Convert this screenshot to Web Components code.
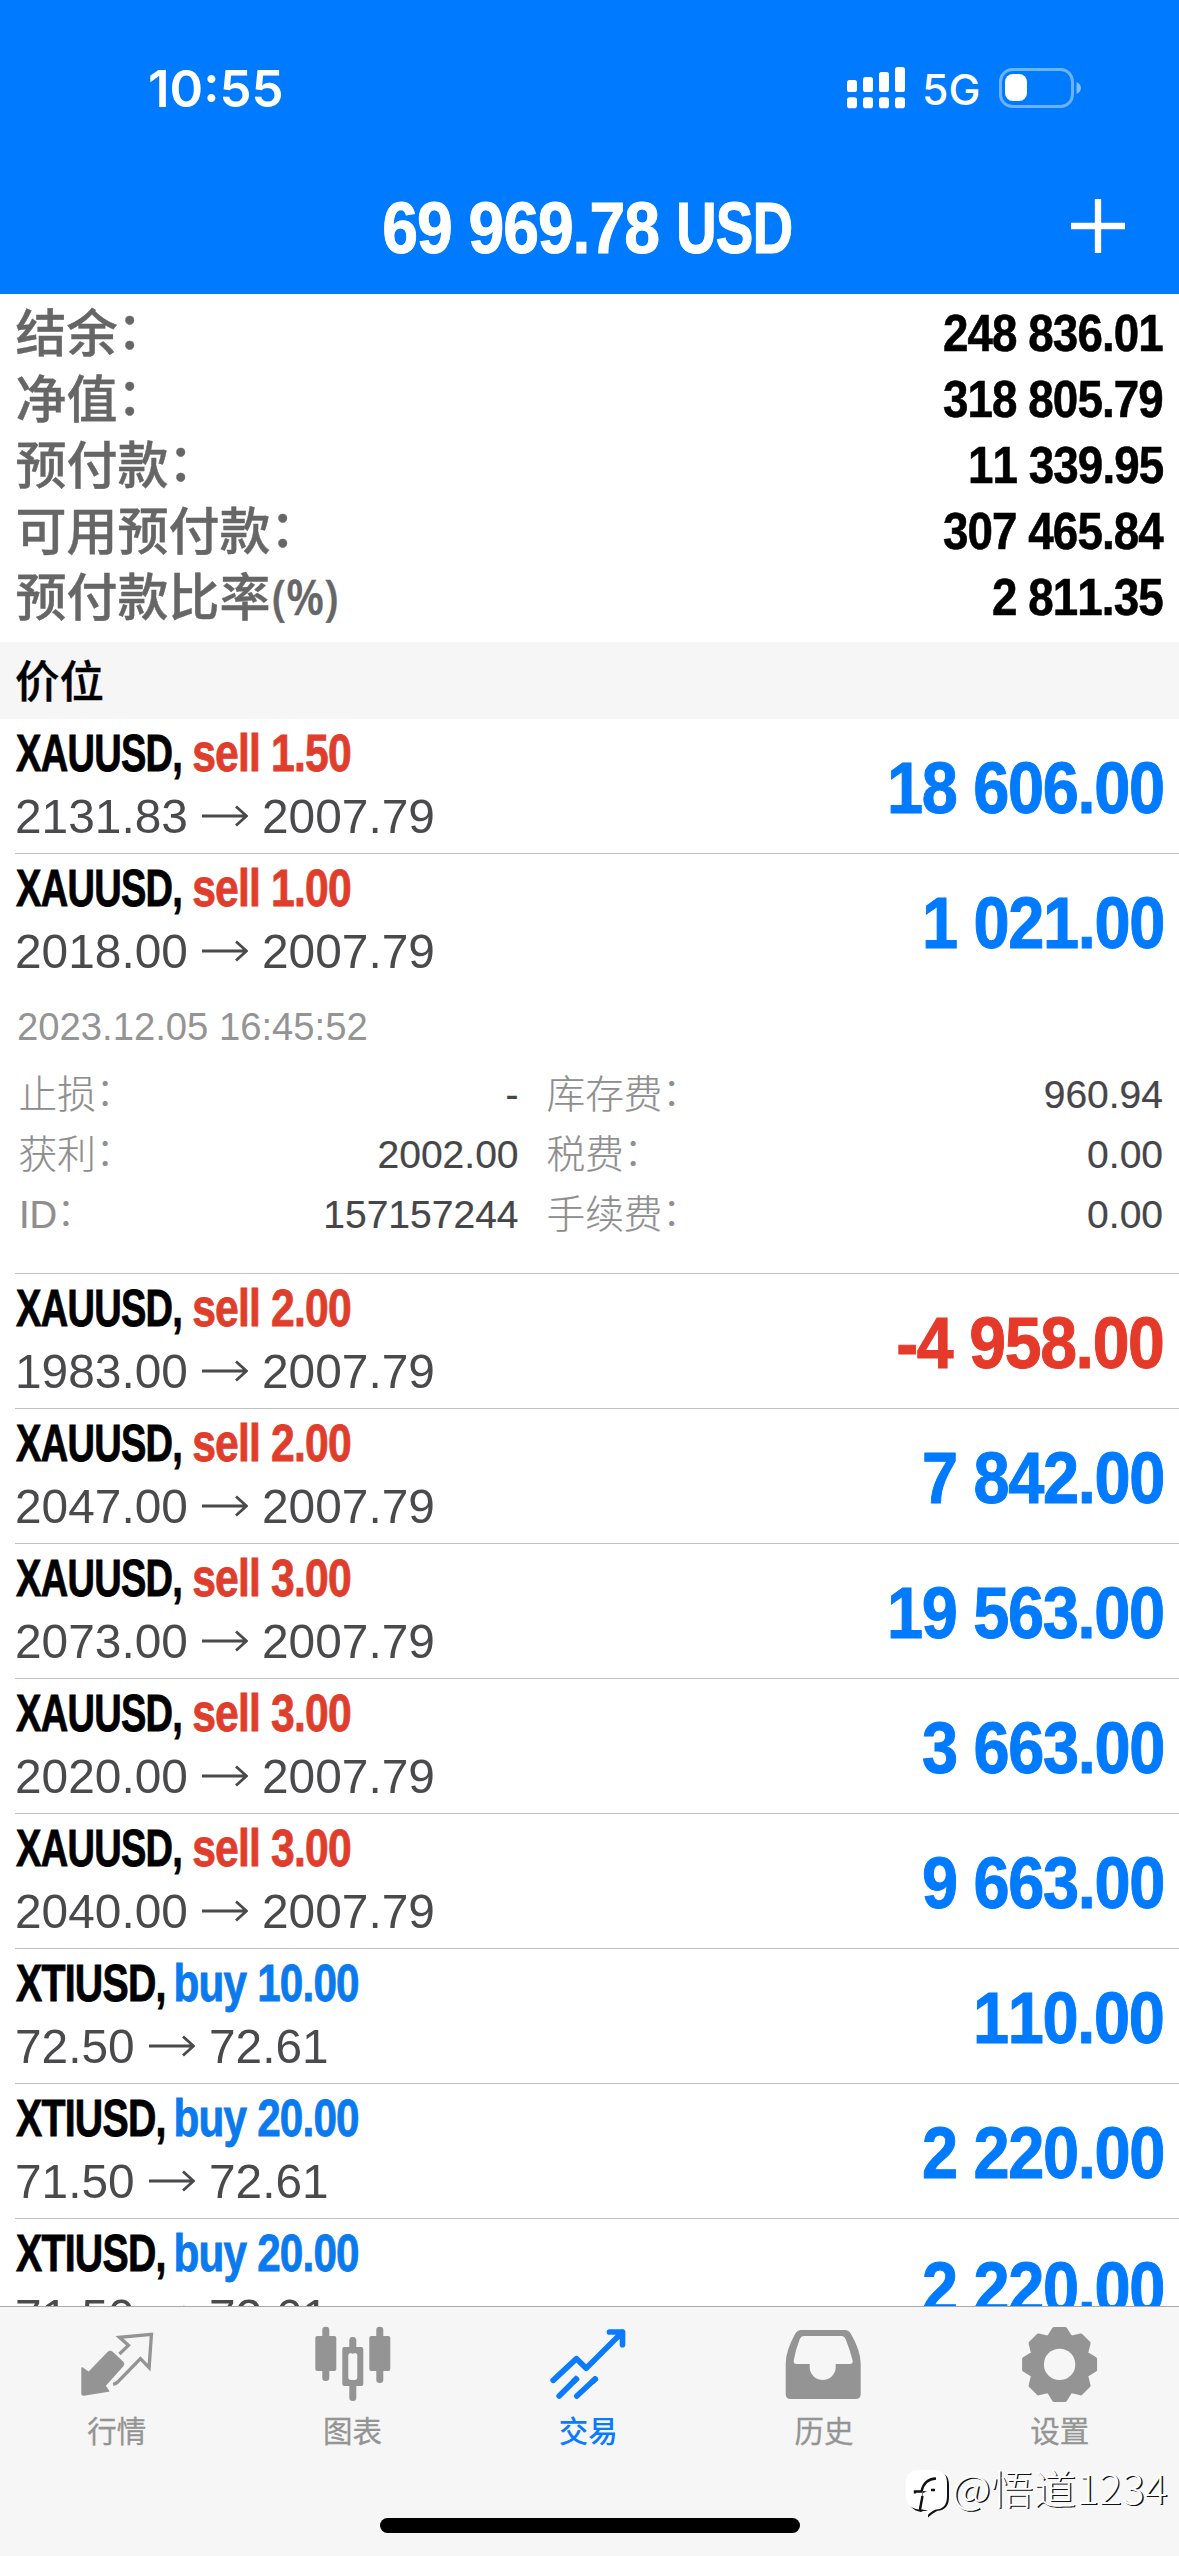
<!DOCTYPE html>
<html lang="zh-CN">
<head>
<meta charset="utf-8">
<title>交易</title>
<style>
html,body{margin:0;padding:0;background:#fff}
body{width:1179px;height:2556px;overflow:hidden;font-family:"Liberation Sans","Noto Sans CJK SC",sans-serif;font-kerning:none}
</style>
</head>
<body>
<trade-app></trade-app>
<script>
const css = s => `<style>*{box-sizing:border-box}${s}</style>`;
const pen = document.createElement('canvas').getContext('2d');

/* A single line of text squeezed horizontally. Its box is as tall as h, with the baseline on the lower edge.
   fit = exact width of the drawn glyphs; scale = horizontal factor on the advance width. */
class FitText extends HTMLElement {
  connectedCallback() {
    const root = this.shadowRoot || this.attachShadow({mode: 'open'});
    const h = parseFloat(this.getAttribute('h') || '35');
    root.innerHTML = css(`:host{display:block;flex:none;height:${h}px;white-space:pre}
      span{display:inline-block;line-height:${h}px;height:${h}px;transform-origin:0 0;vertical-align:top}`) + '<span><slot></slot></span>';
    const cs = getComputedStyle(this);
    pen.font = `${cs.fontWeight} ${cs.fontSize} ${cs.fontFamily}`;
    pen.fontKerning = 'none';
    pen.letterSpacing = cs.letterSpacing === 'normal' ? '0px' : cs.letterSpacing;
    const m = pen.measureText(this.textContent);
    const fit = this.getAttribute('fit');
    let s, dx = 0, w;
    if (fit) {
      w = parseFloat(fit);
      s = w / (m.actualBoundingBoxLeft + m.actualBoundingBoxRight);
      dx = m.actualBoundingBoxLeft;
    } else {
      s = parseFloat(this.getAttribute('scale') || '1');
      w = m.width * s;
    }
    const dy = h / 2 - (m.fontBoundingBoxAscent - m.fontBoundingBoxDescent) / 2;
    this.style.width = w + 'px';
    root.querySelector('span').style.transform = `scaleX(${s}) translate(${dx}px,${dy}px)`;
  }
}
customElements.define('fit-text', FitText);

class Base extends HTMLElement {
  connectedCallback() {
    if (this.shadowRoot) return;
    this.attachShadow({mode: 'open'}).innerHTML = this.render();
  }
  a(n) { return this.getAttribute(n) || ''; }
  /* label whose full-width colon sits tight and centred */
  label() { return this.a('label').replace('：', '<i>：</i>'); }
}

customElements.define('status-bar', class extends Base {
  render() {
    const bars = [[0,80],[16,77],[32,72],[48,67]].map(([x,y]) =>
      `<rect x="${x}" y="${y-67}" width="10" height="${92-y}" rx="2.6"/><rect x="${x}" y="30.2" width="10" height="11" rx="2.8"/>`).join('');
    return css(`:host{display:flex;align-items:flex-start;height:160px;padding:67px 96px 0 150px;color:#fff;font-family:Inter,sans-serif}
      .time{margin-top:2.8px;font-size:51px;font-weight:600}
      .net{margin:7px 0 0 20.5px;font-size:42px;font-weight:500}
      .sig{margin-left:auto} svg{display:block;flex:none} .bat{margin-left:21px}`) + `
      <fit-text class="time" h="37" fit="131.5">10:55</fit-text>
      <svg class="sig" width="58" height="42" fill="#fff">${bars}</svg>
      <fit-text class="net" h="31" fit="53">5G</fit-text>
      <svg class="bat" width="84" height="42"><rect x="1.5" y="2.5" width="72" height="37" rx="12" fill="none" stroke="#fff" stroke-opacity=".42" stroke-width="3"/>
        <rect x="6" y="7" width="22" height="27" rx="8" fill="#fff"/><path d="M77.5 15v12c6-2.500 6-9.500 0-12z" fill="#fff" fill-opacity=".5"/></svg>`;
  }
});

customElements.define('account-header', class extends Base {
  render() {
    return css(`:host{display:block;flex:none;height:293.5px;background:#007aff;color:#fff}
      .bar{display:grid;grid-template-columns:384px 1fr 108px;align-items:start;padding-top:39px}
      .sum{grid-column:2;display:flex;gap:20.500px;margin-top:3px;font-size:73px;font-weight:700;letter-spacing:-1.200px;-webkit-text-stroke:1px #fff}
      svg{grid-column:3;display:block}`) + `
      <status-bar></status-bar>
      <div class="bar"><div class="sum"><fit-text h="51" fit="274.5">69 969.78</fit-text><fit-text h="51" fit="112">USD</fit-text></div>
      <svg width="54" height="54"><path d="M27 0v54M0 27h54" stroke="#fff" stroke-width="6.300"/></svg></div>`;
  }
});

customElements.define('summary-line', class extends Base {
  render() {
    return css(`:host{display:flex;height:66px;justify-content:space-between;align-items:flex-start;padding:0 16px 0 15.5px}
      .k{display:flex;margin-top:4.500px;font:500 51px/66px "Liberation Sans","Noto Sans CJK SC",sans-serif;color:#666;-webkit-text-stroke:.4px #666}
      i{display:inline-block;font-style:normal;transform:translate(-.5px,-3.500px)}
      .k fit-text{margin:13.500px 0 0 2.500px;font:600 49px "Open Sans",sans-serif}
      .v{margin-top:18px;font-size:51px;font-weight:700;letter-spacing:-1px;color:#000;-webkit-text-stroke:.6px #000}`) + `
      <div class="k"><div>${this.label()}</div>${this.a('unit') ? `<fit-text h="36" fit="64">${this.a('unit')}</fit-text>` : ''}</div>
      <fit-text class="v" h="36" scale=".896">${this.a('value')}</fit-text>`;
  }
});

customElements.define('account-summary', class extends Base {
  render() {
    return css(`:host{display:block;flex:none;padding:3.500px 0 14.500px;background:#fff}`) + '<slot></slot>';
  }
});

customElements.define('section-title', class extends Base {
  render() {
    return css(`:host{display:block;flex:none;height:77px;padding-left:15px;background:#f6f6f6;color:#000;font:500 44.500px/73px "Noto Sans CJK SC",sans-serif;-webkit-text-stroke:.4px #000}`) + '<slot></slot>';
  }
});

customElements.define('position-row', class extends Base {
  render() {
    const buy = this.a('side') === 'buy', sym = this.a('symbol');
    const col = buy ? '#0a7aee' : '#e03e2d';
    const neg = this.a('profit')[0] === '-';
    return css(`:host{display:block;flex:none}
      .box{margin-left:15px;border-bottom:1px solid #c0c0c0}
      .main{display:flex;justify-content:space-between;height:134px;padding-right:${neg ? 16.5 : 15.5}px}
      .l{padding-top:17px}
      .t{display:flex;gap:12.500px;padding-left:.5px;font-size:51px;font-weight:700;letter-spacing:-1px;color:#000;-webkit-text-stroke:.8px}
      .s{color:${col}}
      .p{display:flex;align-items:flex-start;margin-top:27.500px;font-size:49px;color:#4a4a4d}
      .p svg{margin:7px 14px 0;flex:none}
      .r{margin-top:43.500px;font-size:73px;font-weight:700;letter-spacing:-1.500px;color:${neg ? '#e5392a' : '#007aff'};-webkit-text-stroke:1px}`) + `
      <div class="box"><div class="main"><div class="l">
        <div class="t"><fit-text h="35" fit="${buy ? 148 : 164.5}">${sym},</fit-text><fit-text class="s" h="35" fit="${buy ? 182.5 : 157.5}">${this.a('side')} ${this.a('lots')}</fit-text></div>
        <div class="p"><fit-text h="35" scale=".976">${this.a('open')}</fit-text>
          <svg width="46" height="22" fill="none" stroke="#4a4a4d" stroke-width="2.800"><path d="M0 11h44M34 1.500l10.500 9.500-10.500 9.500"/></svg>
          <fit-text h="35" scale=".976">${this.a('now')}</fit-text></div>
      </div><fit-text class="r" h="51" ${neg ? 'fit="264.5"' : 'scale=".889"'}>${this.a('profit')}</fit-text></div><slot></slot></div>`;
  }
});

customElements.define('detail-pair', class extends Base {
  render() {
    return css(`:host{display:flex;justify-content:space-between;height:60px;color:#8e8e8e;font:300 38.700px/60px "Noto Sans CJK SC",sans-serif;-webkit-text-stroke:.2px}
      i{display:inline-block;font-style:normal;transform:translate(-.5px,-3px)}
      .k{display:flex} .k fit-text{margin-top:19px;font:39px "Liberation Sans"}
      .v{margin-top:19px;font:39px "Liberation Sans";color:#464649}`) + `
      <div class="k">${this.a('latin') ? `<fit-text h="28.500" scale=".98">${this.a('latin')}</fit-text>` : ''}<div>${this.label()}</div></div>
      <fit-text class="v" h="28.500">${this.a('value')}</fit-text>`;
  }
});

customElements.define('position-detail', class extends Base {
  render() {
    return css(`:host{display:block;height:285px}
      .d{padding:24px 0 0 2px} .d fit-text{font-size:39px;color:#949494}
      .g{display:grid;grid-template-columns:500px 616.500px;column-gap:28px;margin-top:20.500px;padding-left:3.500px}`) + `
      <div class="d"><fit-text h="28.500" scale=".98">${this.a('time')}</fit-text></div><div class="g"><slot></slot></div>`;
  }
});

customElements.define('tab-item', class extends Base {
  render() {
    return css(`:host{flex:1;display:flex;flex-direction:column;align-items:center;padding-top:12px;color:#949494;font:400 29.500px/44px "Noto Sans CJK SC",sans-serif;-webkit-text-stroke:.3px}
      :host([active]){color:#0a7aff;font-weight:500;-webkit-text-stroke:0}
      ::slotted(svg){display:block;flex:none}
      span{margin:1.500px 2.500px 0 0}`) + `<slot name="icon"></slot><span><slot></slot></span>`;
  }
});

const gear = (() => {
  const pts = [];
  for (let i = 0; i < 8; i++) {
    const t = i * Math.PI / 4;
    for (const [r, w] of [[26.5,-11],[29,-9.5],[35.5,-5.5],[35.5,5.5],[29,9.5],[26.5,11]])
      pts.push((r * Math.cos(t) - w * Math.sin(t)).toFixed(2) + ' ' + (r * Math.sin(t) + w * Math.cos(t)).toFixed(2));
  }
  return 'M' + pts.join('L') + 'Z';
})();

const icon = (x, body) => `<svg slot="icon" width="80" height="86" viewBox="${x} 2318 80 86">${body}</svg>`;

customElements.define('tab-bar', class extends Base {
  render() {
    return css(`:host{display:block;flex:none;height:250px;background:#f6f6f6;border-top:1px solid #a8a8a8}
      .tabs{display:flex;height:210.500px}
      .home{width:420px;height:15px;border-radius:8px;background:#000;margin:0 auto}`) + `
    <div class="tabs">
      <tab-item>${icon(77.9, `<g transform="translate(40 2310) scale(.33333)"><path d="M126 171L146 185L204 125Q210 119 217 125L248 154Q252 159 248 164L194 224L205 240L131 252Q126 252 126 247Z" fill="#949494" stroke="#949494" stroke-width="5" stroke-linejoin="round"/><path d="M238 129L265 103L238 79L334 70L327 170L301 143L234 212Q229 218 219 220" fill="none" stroke="#949494" stroke-width="10"/></g>`)}行情</tab-item>
      <tab-item>${icon(313.7, `<g transform="translate(40 2310) scale(.33333)" fill="#949494"><rect x="825" y="75" width="63" height="105" rx="6"/><rect x="846" y="47" width="21" height="163" rx="10"/><rect x="987" y="75" width="63" height="105" rx="6"/><rect x="1008" y="47" width="21" height="169" rx="10"/><rect x="927" y="78" width="21" height="50" rx="10"/><rect x="927" y="208" width="21" height="62" rx="10"/><path fill-rule="evenodd" d="M912 108h51q6 0 6 6v105q0 6-6 6h-51q-6 0-6-6v-105q0-6 6-6zM932 126q-8 0-8 8v65q0 8 8 8h11q8 0 8-8v-65q0-8-8-8z"/></g>`)}图表</tab-item>
      <tab-item active>${icon(549.5, `<g transform="translate(540 2310) scale(.33333)" fill="none" stroke="#0a7aff" stroke-width="17" stroke-linecap="round" stroke-linejoin="round"><path d="M41 208L111 143L140 172L249 63M210 63H249V101"/><path d="M59 255L110 204M112 255L167 204"/><path stroke-linecap="butt" d="M100 214L115 199M157 214L171 200"/></g>`)}交易</tab-item>
      <tab-item>${icon(785.3, `<path transform="translate(540 2310) scale(.33333)" fill="#949494" fill-rule="evenodd" d="M785 57H915Q927 57 934 69Q963 120 963 158V249Q963 264 948 264H753Q738 264 738 249V158Q738 120 766 69Q773 57 785 57ZM793 75Q784 75 780 85Q768 115 762 149Q761 159 771 159H810V168A39 39 0 0 0 888 168V159H930Q940 159 939 149Q930 115 918 85Q914 75 905 75Z"/>`)}历史</tab-item>
      <tab-item>${icon(1021.1, `<g transform="translate(1059.700 2363.400)"><path d="${gear}" fill="#949494" stroke="#949494" stroke-width="4" stroke-linejoin="round"/><circle r="15.700" fill="#f6f6f6"/></g>`)}设置</tab-item>
    </div><div class="home"></div>`;
  }
});

customElements.define('author-mark', class extends Base {
  render() {
    return css(`:host{display:flex;align-items:flex-start;height:48px;color:#fff;font:300 40px "Noto Sans CJK SC",sans-serif}
      svg{display:block;flex:none;margin-right:5px;overflow:visible}
      fit-text{margin-top:3px;text-shadow:1.300px 1.300px .3px #111}`) + `
      <svg width="43" height="48" viewBox="0 0 43 48"><path d="M14 2H30Q43 2 43 15V27Q43 40 31 41Q27 43 22 47.500V41H17L15 42Q3 40 2 28V15Q2 2 14 2Z" fill="#111"/>
      <path d="M13 0H28Q41 0 41 13V26Q41 39 30 39.500Q25 41 21 46L23 22L17 21L13 39.500Q0 38 0 26V13Q0 0 13 0Z" fill="#fff"/>
      <path d="M17 23L14 39L23 41L25 20Z" fill="#fff"/>
      <path d="M14 39.500L16.500 26M9 23.500V21.500H15.500Q18 9 30 8.500M25 20H29" fill="none" stroke="#111" stroke-width="2.400"/></svg>
      <fit-text h="31" fit="213">@悟道1234</fit-text>`;
  }
});

const rows = [
  ['XAUUSD','sell','1.50','2131.83','2007.79','18 606.00'],
  ['XAUUSD','sell','1.00','2018.00','2007.79','1 021.00', `<position-detail time="2023.12.05 16:45:52">
    <detail-pair label="止损：" value="-"></detail-pair><detail-pair label="库存费：" value="960.94"></detail-pair>
    <detail-pair label="获利：" value="2002.00"></detail-pair><detail-pair label="税费：" value="0.00"></detail-pair>
    <detail-pair latin="ID" label="：" value="157157244"></detail-pair><detail-pair label="手续费：" value="0.00"></detail-pair></position-detail>`],
  ['XAUUSD','sell','2.00','1983.00','2007.79','-4 958.00'],
  ['XAUUSD','sell','2.00','2047.00','2007.79','7 842.00'],
  ['XAUUSD','sell','3.00','2073.00','2007.79','19 563.00'],
  ['XAUUSD','sell','3.00','2020.00','2007.79','3 663.00'],
  ['XAUUSD','sell','3.00','2040.00','2007.79','9 663.00'],
  ['XTIUSD','buy','10.00','72.50','72.61','110.00'],
  ['XTIUSD','buy','20.00','71.50','72.61','2 220.00'],
  ['XTIUSD','buy','20.00','71.50','72.61','2 220.00']
];

customElements.define('trade-app', class extends Base {
  render() {
    return css(`:host{position:relative;display:flex;flex-direction:column;width:1179px;height:2556px;overflow:hidden;background:#fff}
      .list{flex:1;min-height:0;overflow:hidden;display:flex;flex-direction:column}
      author-mark{position:absolute;right:12px;bottom:38px}`) + `
      <account-header></account-header>
      <account-summary>
        <summary-line label="结余：" value="248 836.01"></summary-line>
        <summary-line label="净值：" value="318 805.79"></summary-line>
        <summary-line label="预付款：" value="11 339.95"></summary-line>
        <summary-line label="可用预付款：" value="307 465.84"></summary-line>
        <summary-line label="预付款比率" unit="(%)" value="2 811.35"></summary-line>
      </account-summary>
      <section-title>价位</section-title>
      <div class="list">${rows.map(r => `<position-row symbol="${r[0]}" side="${r[1]}" lots="${r[2]}" open="${r[3]}" now="${r[4]}" profit="${r[5]}">${r[6] || ''}</position-row>`).join('')}</div>
      <tab-bar></tab-bar><author-mark></author-mark>`;
  }
});
</script>
</body>
</html>
